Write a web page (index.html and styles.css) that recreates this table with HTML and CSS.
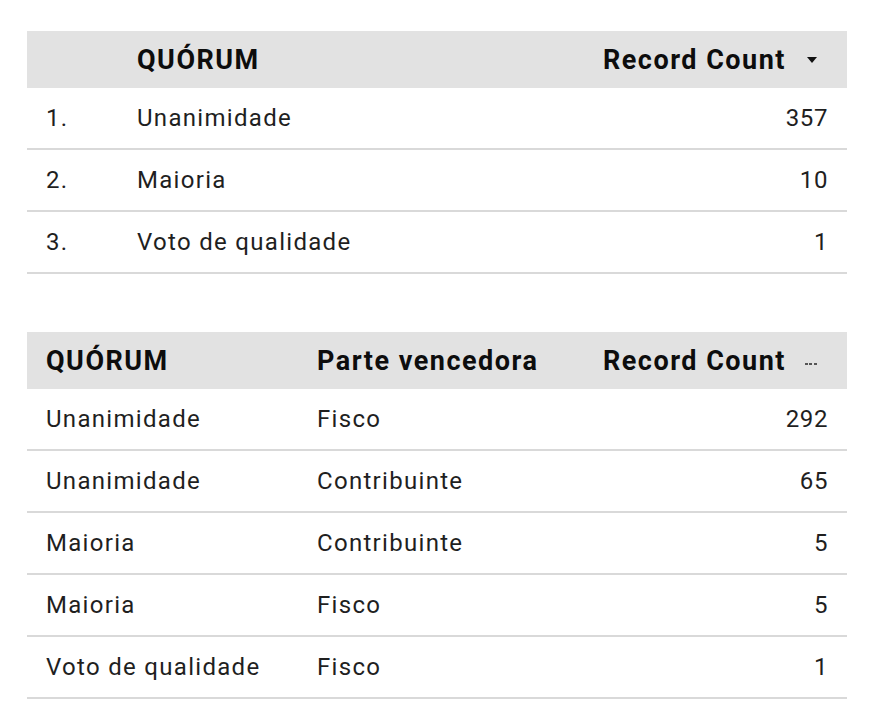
FILE: index.html
```html
<!DOCTYPE html>
<html>
<head>
<meta charset="utf-8">
<link rel="stylesheet" href="styles.css">
</head>
<body>
<div class="page">
  <table class="tbl t1">
    <thead>
      <tr>
        <th class="c-idx"></th>
        <th class="c-name">QUÓRUM</th>
        <th class="c-num"><span class="hdr-num">Record Count<span class="sort-arrow"></span></span></th>
      </tr>
    </thead>
    <tbody>
      <tr><td class="c-idx">1.</td><td class="c-name">Unanimidade</td><td class="c-num">357</td></tr>
      <tr><td class="c-idx">2.</td><td class="c-name">Maioria</td><td class="c-num">10</td></tr>
      <tr><td class="c-idx">3.</td><td class="c-name">Voto de qualidade</td><td class="c-num">1</td></tr>
    </tbody>
  </table>

  <table class="tbl t2">
    <thead>
      <tr>
        <th class="c-q">QUÓRUM</th>
        <th class="c-p">Parte vencedora</th>
        <th class="c-num"><span class="hdr-num">Record Count<span class="dots"></span></span></th>
      </tr>
    </thead>
    <tbody>
      <tr><td class="c-q">Unanimidade</td><td class="c-p">Fisco</td><td class="c-num">292</td></tr>
      <tr><td class="c-q">Unanimidade</td><td class="c-p">Contribuinte</td><td class="c-num">65</td></tr>
      <tr><td class="c-q">Maioria</td><td class="c-p">Contribuinte</td><td class="c-num">5</td></tr>
      <tr><td class="c-q">Maioria</td><td class="c-p">Fisco</td><td class="c-num">5</td></tr>
      <tr><td class="c-q">Voto de qualidade</td><td class="c-p">Fisco</td><td class="c-num">1</td></tr>
    </tbody>
  </table>
</div>
</body>
</html>
```

FILE: styles.css
```css
html, body {
  margin: 0;
  padding: 0;
  background: #ffffff;
}
.page {
  padding: 31px 24px 0 27px;
  font-family: Roboto, "Liberation Sans", sans-serif;
  color: #1f1f1f;
}
.tbl {
  width: 820px;
  border-collapse: collapse;
  table-layout: fixed;
}
.t2 {
  margin-top: 58px;
}
.tbl th {
  background: #e2e2e2;
  height: 57px;
  padding: 0 0 0 19px;
  font-size: 27px;
  font-weight: 700;
  letter-spacing: 1.5px;
  text-align: left;
  color: #0d0d0d;
  vertical-align: middle;
  white-space: nowrap;
}
.tbl td {
  height: 60px;
  padding: 0 0 0 19px;
  font-size: 24px;
  border-bottom: 2px solid #d9d9d9;
  vertical-align: middle;
  letter-spacing: 1.3px;
  white-space: nowrap;
}
.t1 .c-idx { width: 72px; }
.t2 .c-q { width: 252px; }
.t2 .c-p { width: 250px; }
.tbl td.c-num {
  text-align: right;
  padding: 0 19px 0 0;
  letter-spacing: 0.6px;
}
.tbl th.c-num {
  text-align: right;
  padding: 0 30px 0 0;
}
.hdr-num {
  display: inline-flex;
  align-items: center;
}
.sort-arrow {
  display: inline-block;
  width: 0;
  height: 0;
  margin-left: 21px;
  border-left: 5px solid transparent;
  border-right: 5px solid transparent;
  border-top: 6px solid #111;
}
.dots {
  display: inline-block;
  width: 12px;
  height: 2px;
  margin-left: 19px;
  margin-top: 6px;
  background: repeating-linear-gradient(90deg, #555 0 3px, transparent 3px 4.5px);
}
```
